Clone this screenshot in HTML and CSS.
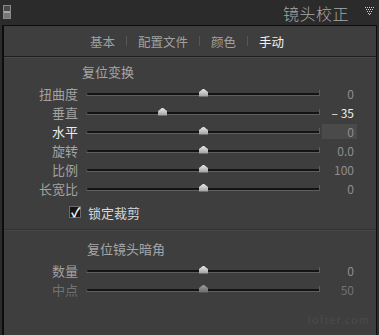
FILE: index.html
```html
<!DOCTYPE html>
<html lang="zh">
<head>
<meta charset="utf-8">
<link rel="stylesheet" href="styles.css">
</head>
<body>
<div class="screen">
  <header class="head">
    <div class="grip"></div>
    <div class="title">镜头校正</div>
    <svg class="tri" width="10" height="8" viewBox="0 0 10 8">
      <g fill="#cfcfcf">
        <rect x="0" y="0" width="1" height="1"/><rect x="2" y="0" width="1" height="1"/><rect x="4" y="0" width="1" height="1"/><rect x="6" y="0" width="1" height="1"/><rect x="8" y="0" width="1" height="1"/>
        <rect x="1" y="2" width="1" height="1"/><rect x="3" y="2" width="1" height="1"/><rect x="5" y="2" width="1" height="1"/><rect x="7" y="2" width="1" height="1"/>
        <rect x="2" y="4" width="1" height="1"/><rect x="4" y="4" width="1" height="1"/><rect x="6" y="4" width="1" height="1"/>
        <rect x="3" y="6" width="1" height="1"/><rect x="5" y="6" width="1" height="1"/>
        <rect x="4" y="7" width="1" height="1"/>
      </g>
    </svg>
  </header>
  <div class="panel">
    <nav class="tabs">
      <span class="tab">基本</span><span class="sep"></span>
      <span class="tab">配置文件</span><span class="sep"></span>
      <span class="tab">颜色</span><span class="sep"></span>
      <span class="tab active">手动</span>
    </nav>
    <section class="group">
      <div class="gtitle">复位变换</div>
      <div class="row"><span class="lbl">扭曲度</span><div class="track"><i class="thumb" style="left:50%"></i></div><span class="val">0</span></div>
      <div class="row"><span class="lbl">垂直</span><div class="track"><i class="thumb" style="left:32.5%"></i></div><span class="val hi">– 35</span></div>
      <div class="row"><span class="lbl hi">水平</span><div class="track"><i class="thumb" style="left:50%"></i></div><span class="val box">0</span></div>
      <div class="row"><span class="lbl">旋转</span><div class="track"><i class="thumb" style="left:50%"></i></div><span class="val">0.0</span></div>
      <div class="row"><span class="lbl">比例</span><div class="track"><i class="thumb" style="left:50%"></i></div><span class="val">100</span></div>
      <div class="row"><span class="lbl">长宽比</span><div class="track"><i class="thumb" style="left:50%"></i></div><span class="val">0</span></div>
      <label class="check"><span class="cb">✓</span><span>锁定裁剪</span></label>
    </section>
    <section class="group second">
      <div class="gtitle">复位镜头暗角</div>
      <div class="row"><span class="lbl">数量</span><div class="track"><i class="thumb" style="left:50%"></i></div><span class="val">0</span></div>
      <div class="row dim"><span class="lbl">中点</span><div class="track"><i class="thumb" style="left:50%"></i></div><span class="val">50</span></div>
    </section>
    <div class="mark">lofter.com</div>
  </div>
</div>
</body>
</html>
```
FILE: styles.css
```css
html, body { margin: 0; padding: 0; }
body {
  width: 379px; height: 335px; overflow: hidden;
  background: #2c2c2c;
  font-family: "Noto Sans CJK SC", "Noto Sans", sans-serif;
  color: #a9a9a9;
}
.screen { display: flex; flex-direction: column; height: 335px; }
.head {
  height: 25px; display: flex; align-items: center;
  background: #2b2b2b; padding: 0 4px 0 3px;
}
.grip {
  width: 6px; height: 12px; border: 1px solid #8a8a8a;
  background: linear-gradient(#4a4a4a 0 45%, #a5a5a5 45% 60%, #777 60%);
  margin-top: -2px;
}
.title { margin-left: auto; font-size: 16px; font-weight: 300; color: #a8a8a8; letter-spacing: 0.5px; margin-right: 16px; line-height: 20px; }
.tri { margin-top: -3px; margin-right: 0px; }
.panel {
  flex: 1; margin: 0 2px; background: #3e3e3e;
  border: 1px solid #0d0d0d; border-bottom: none;
  border-left-width: 2px;
  position: relative;
}
.tabs {
  height: 30px; display: flex; align-items: center; justify-content: center;
  gap: 11px; font-size: 12.5px; border-bottom: 1px solid #1f1f1f;
  box-shadow: 0 1px 0 #4a4a4a;
  padding-right: 6px;
}
.tab { color: #a0a0a0; }
.tab.active { color: #f2f2f2; }
.sep { width: 1px; height: 10px; background: #575757; }
.group { padding-top: 6px; }
.gtitle { font-size: 13px; padding-left: 78px; height: 18px; line-height: 18px; color: #a6a6a6; margin-bottom: 3px; }
.row {
  display: grid; grid-template-columns: 74px 234px 45px; column-gap: 0;
  height: 19px; align-items: center; font-size: 13px;
}
.lbl { text-align: right; padding-right: 0; color: #a2a2a2; }
.lbl.hi { color: #ececec; }
.track {
  position: relative; height: 2px; margin-left: 8px; margin-right: -8px;
  background: #141414; border-radius: 1px;
  box-shadow: 0 1px 0 #5e5e5e, inset 1px 0 0 #555;
}
.track::after {
  content: ""; position: absolute; right: 0; top: -3px; width: 1px; height: 6px; background: #5c5c5c;
}
.thumb {
  position: absolute; top: -4px; width: 9px; height: 8px; margin-left: -4px;
  background: linear-gradient(#e8e8e8, #9c9c9c);
  clip-path: polygon(50% 0, 100% 45%, 100% 100%, 0 100%, 0 45%);
}
.val { text-align: right; font-size: 12px; color: #8e8e8e; padding-right: 3px; margin-left: 10px; height: 15px; line-height: 15px; }
.val.hi { color: #efefef; }
.val.box { background: #4a4a4a; }
.row.dim .lbl, .row.dim .val { color: #727272; }
.row.dim .thumb { background: linear-gradient(#9a9a9a, #6a6a6a); }
.check { display: flex; align-items: center; gap: 7px; margin: 5px 0 0 65px; font-size: 13px; color: #d8d8d8; height: 18px; }
.cb {
  width: 10px; height: 10px; background: #161616; border: 1px solid #6a6a6a;
  color: #f4f4f4; font-size: 13px; line-height: 9px; text-indent: 1px; font-weight: bold; overflow: visible;
}
.second { margin-top: 8px; border-top: 1px solid #333; box-shadow: inset 0 1px 0 #474747; padding-top: 10px; }
.second .gtitle { padding-left: 83px; margin-bottom: 3px; }
.mark { position: absolute; right: 6px; bottom: 8px; font-size: 11px; color: #4b4b4b; letter-spacing: 1px; }
```
